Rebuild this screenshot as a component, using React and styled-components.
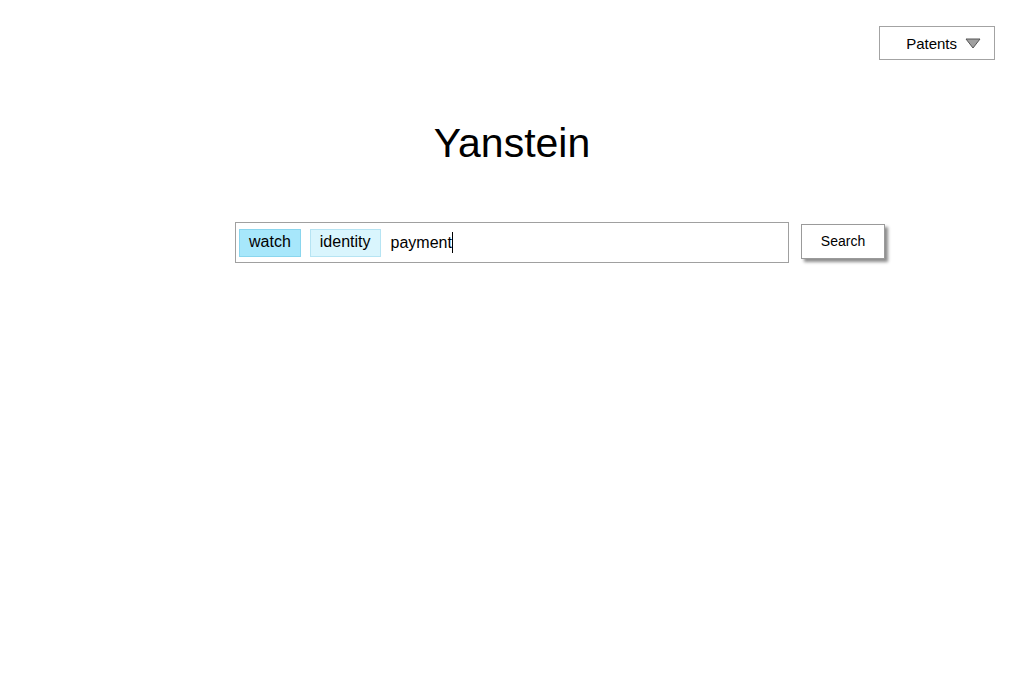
import React from 'react';
import styled, { createGlobalStyle } from 'styled-components';

const GlobalStyle = createGlobalStyle`
	html, body {
		margin: 0;
		padding: 0;
		background: #fff;
		font-family: "Liberation Sans", Arial, sans-serif;
		color: #000;
	}
`;

const Page = styled.div`
	display: flex;
	flex-direction: column;
	width: 1024px;
	height: 700px;
`;

const TopBar = styled.div`
	display: flex;
	justify-content: flex-end;
	padding: 26px 29px 0 0;
`;

const Dropdown = styled.div`
	display: flex;
	align-items: center;
	justify-content: flex-end;
	box-sizing: border-box;
	width: 116px;
	height: 34px;
	padding-right: 13px;
	gap: 8px;
	border: 1px solid #a3a3a3;
	font-size: 15px;
	cursor: pointer;
`;

const Title = styled.h1`
	margin: 60px 0 0;
	text-align: center;
	font-size: 41px;
	font-weight: 400;
	line-height: 46px;
`;

const SearchRow = styled.div`
	display: grid;
	grid-template-columns: 1fr 554px 1fr;
	margin-top: 56px;
`;

const SearchBox = styled.div`
	grid-column: 2;
	display: flex;
	align-items: center;
	box-sizing: border-box;
	height: 41px;
	padding: 0 3px;
	gap: 9px;
	border: 1px solid #a0a0a0;
`;

const Chip = styled.span`
	display: inline-flex;
	align-items: center;
	box-sizing: border-box;
	height: 28px;
	padding: 0 9px 1px 9px;
	font-size: 16px;
	background: ${p => (p.$active ? '#a7e7fb' : '#d9f5fd')};
	border: 1px solid ${p => (p.$active ? '#8ad6ee' : '#b6e4f3')};
`;

const Query = styled.span`
	display: inline-flex;
	align-items: center;
	margin-left: 1px;
	font-size: 16px;
`;

const Caret = styled.span`
	display: inline-block;
	width: 1px;
	height: 21px;
	background: #000;
`;

const SearchButton = styled.button`
	grid-column: 3;
	justify-self: start;
	align-self: start;
	margin: 2px 0 0 12px;
	box-sizing: border-box;
	width: 84px;
	height: 35px;
	padding: 0 0 2px;
	background: #fff;
	border: 1px solid #9a9a9a;
	box-shadow: 3px 3px 3px rgba(0, 0, 0, 0.45);
	font-family: "Liberation Sans", Arial, sans-serif;
	font-size: 14px;
	color: #000;
	cursor: pointer;
`;

const Triangle = () => (
	<svg width="16" height="11" viewBox="0 0 16 11">
		<polygon points="1,1 15,1 8,10" fill="#a0a0a0" stroke="#555" strokeWidth="1" strokeLinejoin="round" />
	</svg>
);

const App = () => {
	return (
		<>
			<GlobalStyle />
			<Page>
				<TopBar>
					<Dropdown>
						<span>Patents</span>
						<Triangle />
					</Dropdown>
				</TopBar>
				<Title>Yanstein</Title>
				<SearchRow>
					<SearchBox>
						<Chip $active>watch</Chip>
						<Chip>identity</Chip>
						<Query>
							payment
							<Caret />
						</Query>
					</SearchBox>
					<SearchButton>Search</SearchButton>
				</SearchRow>
			</Page>
		</>
	);
};

export default App;
